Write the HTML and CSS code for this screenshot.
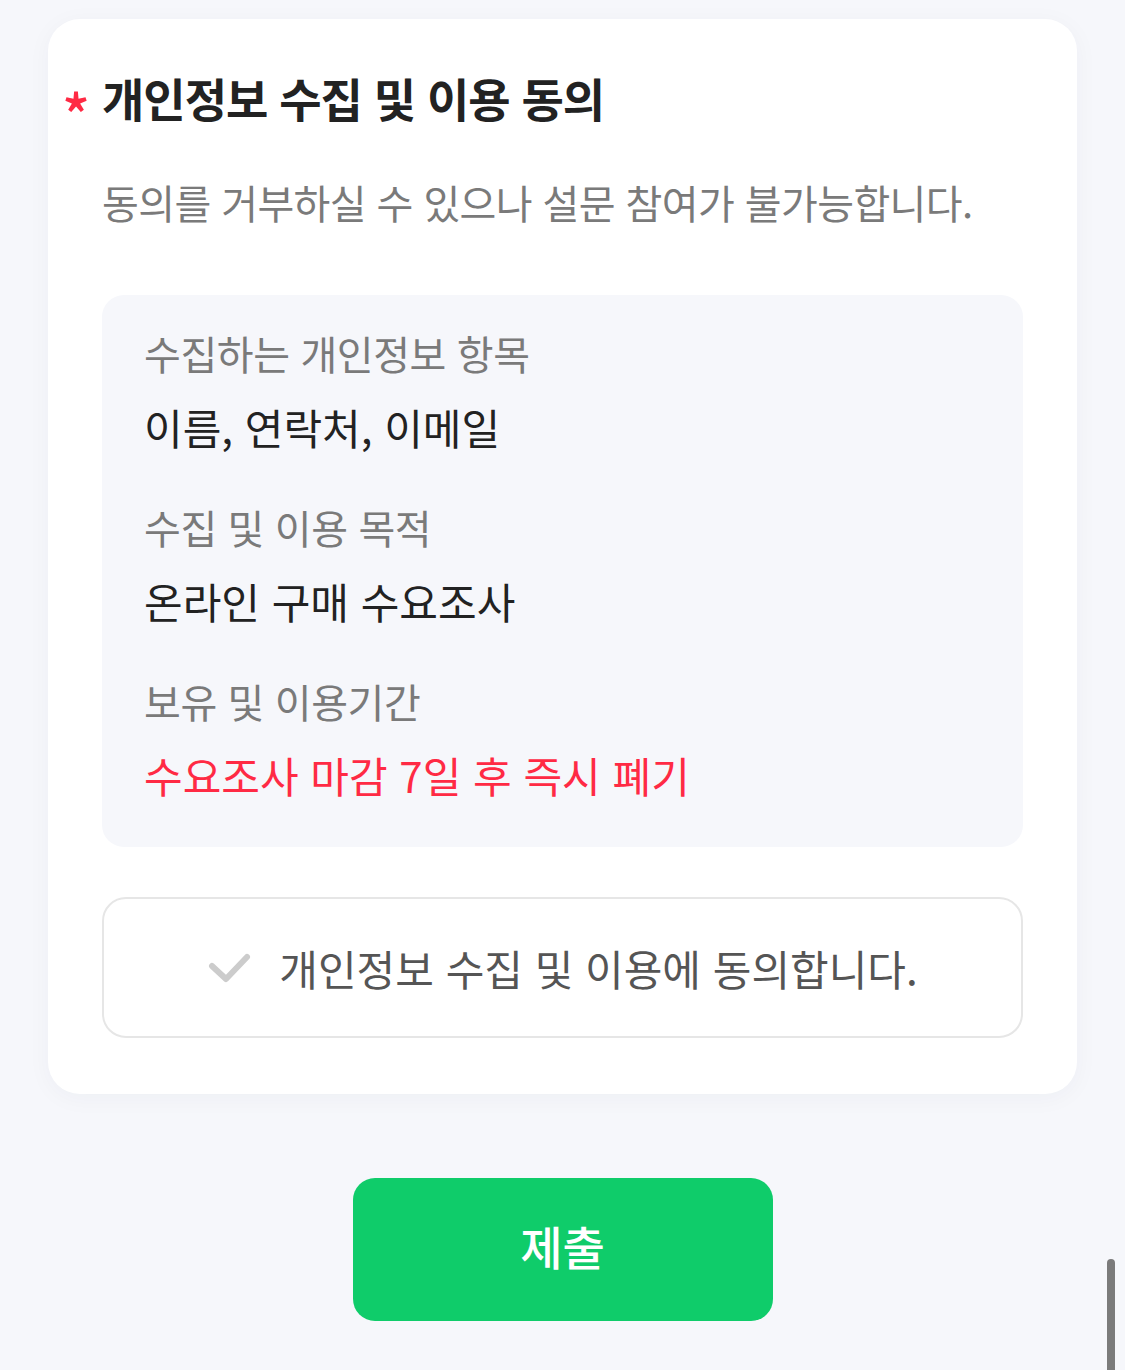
FILE: index.html
```html
<!DOCTYPE html>
<html lang="ko">

<head>
    <meta charset="UTF-8">
    <meta name="viewport" content="width=device-width, initial-scale=1.0">
    <title>개인정보 수집 및 이용 동의</title>
    <link rel="stylesheet" href="styles.css">
</head>

<body>
    <div class="page">
        <section class="card">
            <h2 class="title"><span class="required">*</span>개인정보 수집 및 이용 동의</h2>
            <p class="desc">동의를 거부하실 수 있으나 설문 참여가 불가능합니다.</p>

            <div class="info">
                <div class="info-row">
                    <div class="info-label">수집하는 개인정보 항목</div>
                    <div class="info-value">이름, 연락처, 이메일</div>
                </div>
                <div class="info-row">
                    <div class="info-label">수집 및 이용 목적</div>
                    <div class="info-value">온라인 구매 수요조사</div>
                </div>
                <div class="info-row">
                    <div class="info-label">보유 및 이용기간</div>
                    <div class="info-value red">수요조사 마감 7일 후 즉시 폐기</div>
                </div>
            </div>

            <label class="agree">
                <svg class="check" width="44" height="34" viewBox="0 0 44 34">
                    <path d="M5 15 L19 28 L40 6" fill="none" stroke="#cccccc" stroke-width="6" stroke-linecap="round" stroke-linejoin="round" />
                </svg>
                <span>개인정보 수집 및 이용에 동의합니다.</span>
            </label>
        </section>

        <div class="actions">
            <button class="submit" type="button">제출</button>
        </div>
    </div>

    <!-- 스크롤바 표시 -->
    <div class="scrollbar"></div>
</body>

</html>
```

FILE: styles.css
```css
* {
    box-sizing: border-box;
}

body {
    margin: 0;
    background-color: #f6f7fb;
    font-family: "Noto Sans CJK KR", "Noto Sans", sans-serif;
    color: #222;
}

.page {
    padding: 19px 48px 0 48px;
}

.card {
    background-color: #fff;
    border-radius: 32px;
    padding: 48px 54px 56px 54px;
    box-shadow: 0 4px 24px rgba(30, 40, 80, 0.04);
}

.title {
    display: flex;
    margin: 0 0 0 -40px;
    font-size: 46px;
    line-height: 60px;
    font-weight: 700;
    color: #222;
    letter-spacing: -1px;
}

.required {
    width: 40px;
    height: 60px;
    color: #ff2a44;
    font-size: 58px;
    line-height: 60px;
    padding-top: 16px;
    font-weight: 500;
}

.desc {
    margin: 49px 0 0 0;
    font-size: 40px;
    line-height: 52px;
    color: #7a7a7a;
    letter-spacing: -0.6px;
}

/* 개인정보 항목 박스 */
.info {
    margin-top: 67px;
    background-color: #f6f7fb;
    border-radius: 22px;
    padding: 32px 42px 44px 42px;
    display: flex;
    flex-direction: column;
    gap: 46px;
}

.info-label {
    font-size: 40px;
    line-height: 52px;
    color: #7a7a7a;
    letter-spacing: -0.4px;
}

.info-value {
    margin-top: 20px;
    font-size: 42px;
    line-height: 56px;
    color: #222;
}

.info-value.red {
    color: #ff2a44;
}

/* 동의 체크 */
.agree {
    margin-top: 50px;
    height: 141px;
    border: 2px solid #e6e6e6;
    border-radius: 24px;
    display: flex;
    align-items: center;
    justify-content: center;
    gap: 28px;
    font-size: 42px;
    color: #555;
    cursor: pointer;
}

.check {
    display: block;
}

.actions {
    display: flex;
    justify-content: center;
    margin-top: 84px;
}

.submit {
    width: 420px;
    height: 143px;
    border: 0;
    border-radius: 22px;
    background-color: #0fcc6a;
    color: #fff;
    font-family: inherit;
    font-size: 46px;
    font-weight: 500;
    padding-bottom: 10px;
    cursor: pointer;
}

.scrollbar {
    position: fixed;
    right: 10px;
    top: 1259px;
    width: 8px;
    height: 140px;
    border-radius: 4px;
    background-color: #7b7b7b;
}
```
